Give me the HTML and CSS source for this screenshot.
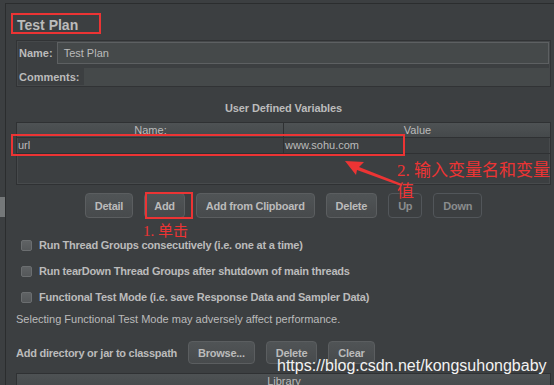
FILE: index.html
```html
<!DOCTYPE html>
<html lang="zh">
<head>
    <meta charset="UTF-8">
    <title>Test Plan</title>
    <link rel="stylesheet" href="styles.css">
</head>
<body>
    <div class="window">
        <div class="splitter"><span class="grip"></span></div>
        <div class="main">
            <h1 class="title">Test Plan</h1>

            <div class="info">
                <div class="info-row">
                    <span class="info-label">Name:</span>
                    <div class="field field-name">Test Plan</div>
                </div>
                <div class="info-row">
                    <span class="info-label">Comments:</span>
                    <div class="field field-comments"></div>
                </div>
            </div>

            <div class="section-title">User Defined Variables</div>
            <div class="table vars">
                <div class="table-head">
                    <div class="cell">Name:</div>
                    <div class="cell">Value</div>
                </div>
                <div class="table-row">
                    <div class="cell">url</div>
                    <div class="cell">www.sohu.com</div>
                </div>
            </div>

            <div class="buttons">
                <button class="btn">Detail</button>
                <button class="btn">Add</button>
                <button class="btn">Add from Clipboard</button>
                <button class="btn">Delete</button>
                <button class="btn btn-off">Up</button>
                <button class="btn btn-off">Down</button>
            </div>

            <div class="options">
                <div class="option"><span class="checkbox"></span>Run Thread Groups consecutively (i.e. one at a time)</div>
                <div class="option"><span class="checkbox"></span>Run tearDown Thread Groups after shutdown of main threads</div>
                <div class="option"><span class="checkbox"></span>Functional Test Mode (i.e. save Response Data and Sampler Data)</div>
            </div>
            <p class="note">Selecting Functional Test Mode may adversely affect performance.</p>

            <div class="classpath">
                <span class="classpath-label">Add directory or jar to classpath</span>
                <button class="btn btn-small">Browse...</button>
                <button class="btn btn-small">Delete</button>
                <button class="btn btn-small">Clear</button>
            </div>
            <div class="table library">
                <div class="table-head">
                    <div class="cell">Library</div>
                </div>
            </div>
        </div>
    </div>

    <!-- пометки поверх скриншота -->
    <div class="mark mark-title"></div>
    <div class="mark mark-row"></div>
    <div class="mark mark-add"></div>
    <div class="note-red note-add">1. 单击</div>
    <div class="note-red note-var">2. 输入变量名和变量<br>值</div>
    <svg class="arrow" width="70" height="40" viewBox="340 155 70 40">
        <polygon points="345,161 364,162 359,167 402,184 401,186 357,170 356,175" fill="#ec3434"/>
    </svg>
    <div class="watermark">https://blog.csdn.net/kongsuhongbaby</div>
</body>
</html>
```

FILE: styles.css
```css
body {
    margin: 0;
    width: 554px;
    height: 385px;
    overflow: hidden;
    background: #3c3f41;
    color: #bbbbbb;
    font-family: "Liberation Sans", Arial, sans-serif;
    font-size: 11px;
    position: relative;
}
.window {
    display: flex;
    height: 385px;
}
.splitter {
    width: 5px;
    position: relative;
}
.grip {
    position: absolute;
    left: 0;
    top: 197px;
    width: 5px;
    height: 20px;
    background: radial-gradient(circle, #8a8d8f 0.6px, transparent 1px) 0 0 / 2px 2px;
}
.main {
    flex: 1;
    margin-top: 3px;
    border-top: 1px solid #2b2d2e;
    border-left: 1px solid #2b2d2e;
    padding: 0 3px 0 10px;
}
.title {
    margin: 11px 0 5px 1px;
    font-size: 14px;
    line-height: 20px;
    font-weight: bold;
}
.info {
    border: 1px solid #313335;
    box-shadow: inset 0 0 0 1px #45484a;
    padding: 1px 1px 0 1px;
    display: flex;
    flex-direction: column;
    gap: 4px;
}
.info-row {
    display: flex;
    align-items: center;
}
.info-label {
    font-weight: bold;
    padding: 0 4px 0 1px;
}
.field {
    flex: 1;
    background: #45494a;
    border: 1px solid #5d6062;
    box-sizing: border-box;
    padding-left: 6px;
}
.field-name {
    height: 22px;
    line-height: 20px;
}
.field-comments {
    height: 18px;
    border-color: #45494a;
}
.section-title {
    margin-top: 14px;
    text-align: center;
    font-weight: bold;
    line-height: 14px;
    letter-spacing: -0.1px;
}
.table {
    border: 1px solid #2f3133;
    box-shadow: inset 0 0 0 1px #474a4c;
    margin-top: 7px;
}
.vars {
    height: 61px;
}
.table-head {
    display: flex;
    height: 14px;
    line-height: 14px;
    background: linear-gradient(#4e5254, #45494b);
    border-bottom: 1px solid #2f3133;
}
.table-head .cell {
    text-align: center;
}
.table-row {
    display: flex;
    height: 15px;
    line-height: 15px;
    border-bottom: 1px solid #2f3133;
}
.cell {
    flex: 1;
    padding-left: 1px;
}
.cell + .cell {
    border-left: 1px solid #2f3133;
}
.buttons {
    display: flex;
    justify-content: center;
    gap: 11px;
    margin-top: 8px;
}
.btn {
    height: 25px;
    min-width: 34px;
    padding: 0 9px;
    background: linear-gradient(#505456, #474a4c);
    border: 1px solid #5b5e60;
    border-radius: 4px;
    color: #bbbbbb;
    font-family: "Liberation Sans", Arial, sans-serif;
    font-size: 11px;
    font-weight: bold;
    letter-spacing: -0.25px;
}
.btn-off {
    background: #3c3f41;
    border-color: #52565a;
    color: #8a8c8e;
}
.btn-small {
    height: 23px;
}
.options {
    margin-top: 14px;
}
.option {
    display: flex;
    align-items: center;
    height: 26px;
    font-weight: bold;
    gap: 7px;
    letter-spacing: -0.22px;
}
.checkbox {
    width: 11px;
    height: 11px;
    margin-left: 5px;
    box-sizing: border-box;
    border: 1px solid #6b6e70;
    border-radius: 2px;
    background: linear-gradient(#5f6264, #55585a);
}
.note {
    margin: 1px 0 0;
    line-height: 16px;
}
.classpath {
    display: flex;
    align-items: center;
    gap: 11px;
    margin-top: 14px;
}
.classpath-label {
    font-weight: bold;
    letter-spacing: -0.25px;
}
.library {
    margin-top: 9px;
}
.mark {
    position: absolute;
    border: 2px solid #ec3434;
    box-sizing: border-box;
}
.mark-title {
    left: 11px;
    top: 13px;
    width: 90px;
    height: 21px;
}
.mark-row {
    left: 11px;
    top: 134px;
    width: 394px;
    height: 22px;
}
.mark-add {
    left: 145px;
    top: 192px;
    width: 48px;
    height: 27px;
}
.note-red {
    position: absolute;
    color: #ec3434;
    font-family: "Liberation Serif", "Noto Sans CJK SC", serif;
    white-space: nowrap;
}
.note-add {
    left: 143px;
    top: 222px;
    font-size: 15px;
    line-height: 18px;
}
.note-var {
    left: 397px;
    top: 160px;
    font-size: 17px;
    line-height: 21px;
}
.arrow {
    position: absolute;
    left: 340px;
    top: 155px;
}
.watermark {
    position: absolute;
    left: 277px;
    top: 357px;
    font-size: 16px;
    line-height: 18px;
    color: #f2f2f2;
    font-family: "Liberation Sans", Arial, sans-serif;
}
```
